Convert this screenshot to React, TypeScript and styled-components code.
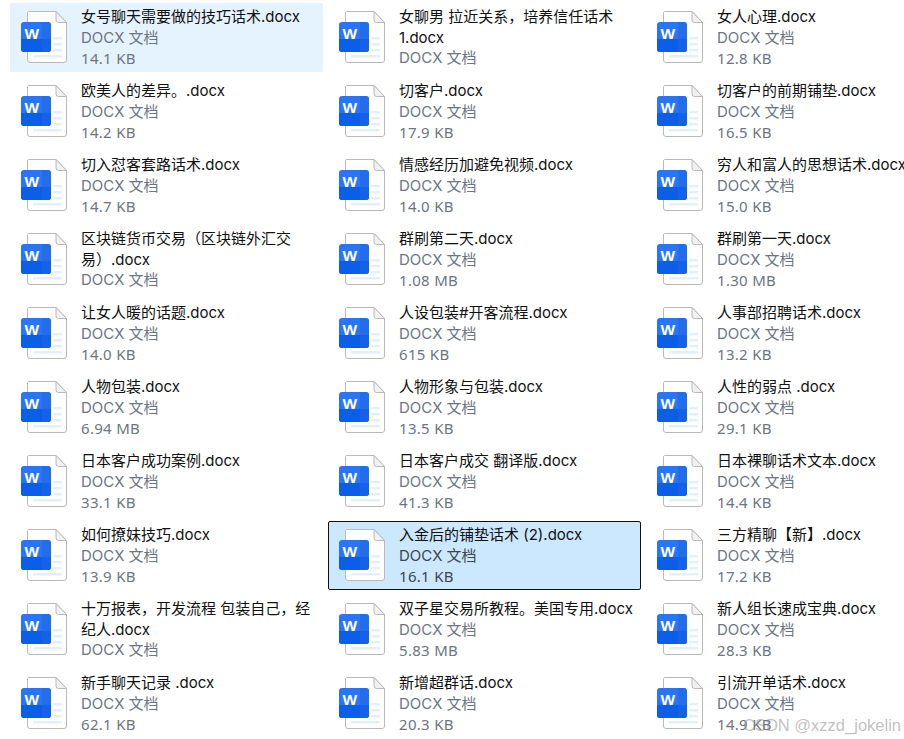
import { createGlobalStyle } from 'styled-components';
import styled from 'styled-components';

type FileEntry = {
  name: string;
  size: string;
  state?: 'hover' | 'selected';
};

const files: FileEntry[] = [
  { name: '女号聊天需要做的技巧话术.docx', size: '14.1 KB', state: 'hover' },
  { name: '女聊男 拉近关系，培养信任话术1.docx', size: '' },
  { name: '女人心理.docx', size: '12.8 KB' },
  { name: '欧美人的差异。.docx', size: '14.2 KB' },
  { name: '切客户.docx', size: '17.9 KB' },
  { name: '切客户的前期铺垫.docx', size: '16.5 KB' },
  { name: '切入怼客套路话术.docx', size: '14.7 KB' },
  { name: '情感经历加避免视频.docx', size: '14.0 KB' },
  { name: '穷人和富人的思想话术.docx', size: '15.0 KB' },
  { name: '区块链货币交易（区块链外汇交易）.docx', size: '' },
  { name: '群刷第二天.docx', size: '1.08 MB' },
  { name: '群刷第一天.docx', size: '1.30 MB' },
  { name: '让女人暖的话题.docx', size: '14.0 KB' },
  { name: '人设包装#开客流程.docx', size: '615 KB' },
  { name: '人事部招聘话术.docx', size: '13.2 KB' },
  { name: '人物包装.docx', size: '6.94 MB' },
  { name: '人物形象与包装.docx', size: '13.5 KB' },
  { name: '人性的弱点 .docx', size: '29.1 KB' },
  { name: '日本客户成功案例.docx', size: '33.1 KB' },
  { name: '日本客户成交 翻译版.docx', size: '41.3 KB' },
  { name: '日本裸聊话术文本.docx', size: '14.4 KB' },
  { name: '如何撩妹技巧.docx', size: '13.9 KB' },
  { name: '入金后的铺垫话术 (2).docx', size: '16.1 KB', state: 'selected' },
  { name: '三方精聊【新】.docx', size: '17.2 KB' },
  { name: '十万报表，开发流程 包装自己，经纪人.docx', size: '' },
  { name: '双子星交易所教程。美国专用.docx', size: '5.83 MB' },
  { name: '新人组长速成宝典.docx', size: '28.3 KB' },
  { name: '新手聊天记录 .docx', size: '62.1 KB' },
  { name: '新增超群话.docx', size: '20.3 KB' },
  { name: '引流开单话术.docx', size: '14.9 KB' },
];

const WordFileIcon = () => (
  <IconSvg viewBox="0 0 48 54" aria-hidden="true">
    <path
      d="M8.500 1.500H36L46.500 12.500V50a2.500 2.500 0 0 1-2.500 2.500H10A2.500 2.500 0 0 1 7.500 50V2.500Z"
      fill="#fff"
      stroke="#b9b9b9"
      strokeWidth="1"
    />
    <path d="M36 1.500V10a2.500 2.500 0 0 0 2.500 2.500H46.500Z" fill="#f1f1f1" stroke="#b9b9b9" strokeWidth="1" />
    <rect x="33" y="27" width="9" height="2.600" rx="1" fill="#e4effc" />
    <rect x="33" y="33" width="9" height="2.600" rx="1" fill="#e4effc" />
    <rect x="33" y="39" width="9" height="2.600" rx="1" fill="#e4effc" />
    <rect x="13" y="45" width="29" height="2.600" rx="1.200" fill="#e4effc" />
    <rect x="1" y="12" width="30" height="30" rx="3" fill="#2a75f3" />
    <path d="M1 29H31V39a3 3 0 0 1-3 3H4a3 3 0 0 1-3-3Z" fill="#0a5ee8" />
    <path d="M22 12H28a3 3 0 0 1 3 3V39a3 3 0 0 1-3 3H22Z" fill="#1b66e6" opacity="0.55" />
    <text x="4.500" y="29" fontFamily="'Liberation Sans', sans-serif" fontWeight="700" fontSize="15.500" fill="#fff">
      W
    </text>
  </IconSvg>
);

const App = () => {
  return (
    <>
      <GlobalStyle />
      <FileGrid>
        {files.map((file) => (
          <FileCard key={file.name} $state={file.state}>
            <WordFileIcon />
            <FileText>
              <FileName>{file.name}</FileName>
              <FileMeta $selected={file.state === 'selected'}>DOCX 文档</FileMeta>
              {file.size && <FileSize $selected={file.state === 'selected'}>{file.size}</FileSize>}
            </FileText>
          </FileCard>
        ))}
      </FileGrid>
      <Watermark>CSDN @xzzd_jokelin</Watermark>
    </>
  );
};

export default App;

const GlobalStyle = createGlobalStyle`
  html, body {
    margin: 0;
    width: 904px;
    height: 739px;
    overflow: hidden;
    background: #fff;
  }

  body {
    position: relative;
    font-family: Inter, "Noto Sans CJK SC", sans-serif;
  }
`;

const FileGrid = styled.div`
  display: grid;
  grid-template-columns: repeat(3, 313px);
  grid-auto-rows: 69px;
  gap: 5px;
  padding: 3px 0 0 10px;
  width: 1000px;
`;

const FileCard = styled.div<{ $state?: 'hover' | 'selected' }>`
  display: flex;
  box-sizing: border-box;
  padding: 4px 0 0 10px;
  border-radius: 2px;
  border: 1px solid ${(p) => (p.$state === 'selected' ? '#111' : 'transparent')};
  background-color: ${(p) =>
    p.$state === 'selected' ? '#cce8ff' : p.$state === 'hover' ? '#e5f3ff' : 'transparent'};
`;

const IconSvg = styled.svg`
  flex: none;
  width: 48px;
  height: 54px;
  margin: 2px 13px 0 -1px;
`;

const FileText = styled.div`
  width: 238px;
  display: flex;
  flex-direction: column;
  margin-top: -1px;
`;

const FileName = styled.div`
  font-size: 15px;
  line-height: 20.5px;
  color: #111;
  overflow-wrap: anywhere;
`;

const FileMeta = styled.div<{ $selected?: boolean }>`
  font-size: 15px;
  line-height: 20.5px;
  color: ${(p) => (p.$selected ? '#3d4650' : '#6d7580')};
  white-space: nowrap;
`;

const FileSize = styled(FileMeta)`
  font-family: "Noto Sans", sans-serif;
  letter-spacing: 0.3px;
`;

const Watermark = styled.div`
  position: absolute;
  right: 3px;
  bottom: 4px;
  font-family: "Liberation Sans", sans-serif;
  font-size: 16.500px;
  color: rgba(140, 140, 140, 0.55);
`;
